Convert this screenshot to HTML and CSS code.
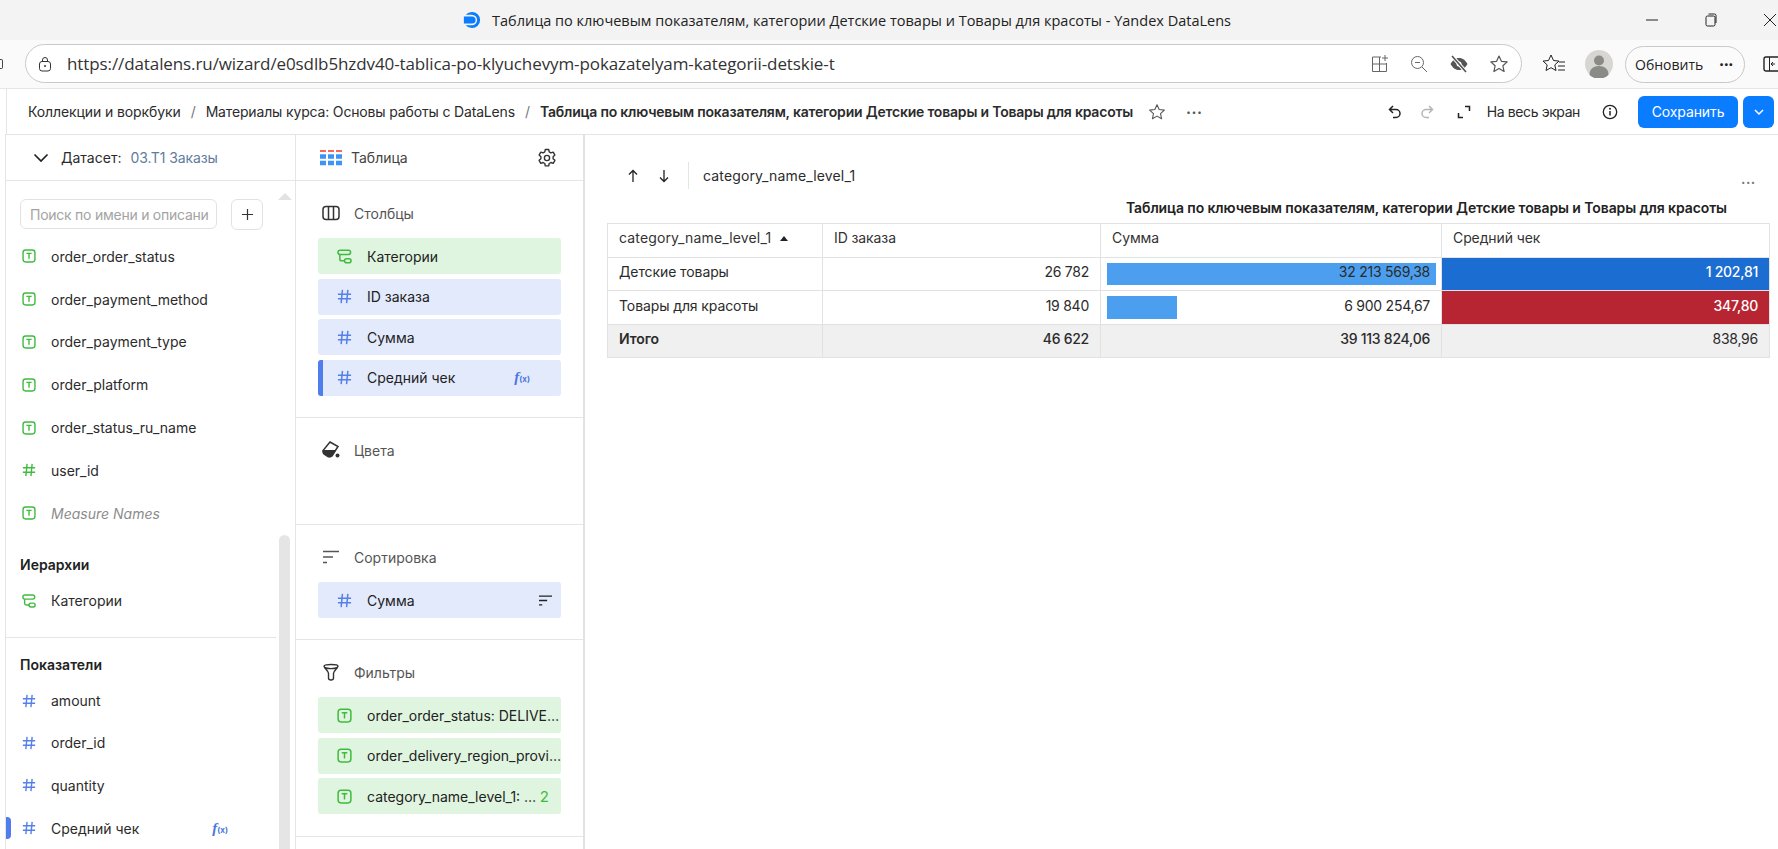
FILE: index.html
```html
<!DOCTYPE html>
<html>

<head>
    <title>Yandex DataLens</title>
    <link rel="stylesheet" href="styles.css">
</head>

<body>
    <svg class="sprite" xmlns="http://www.w3.org/2000/svg">
        <symbol id="i-text" viewBox="0 0 16 16">
            <rect x="1.2" y="1.2" width="13.6" height="13.6" rx="3" fill="none" stroke="currentColor" stroke-width="1.6"/>
            <path d="M5 5h6M8 5v6.2" fill="none" stroke="currentColor" stroke-width="1.6"/>
        </symbol>
        <symbol id="i-hash" viewBox="0 0 16 16">
            <path d="M1 5.5h14M1 10.5h14M5.8 1 4.4 15M11.6 1l-1.4 14" fill="none" stroke="currentColor" stroke-width="1.6"/>
        </symbol>
        <symbol id="i-tree" viewBox="0 0 16 16">
            <rect x="1" y="1.2" width="13.5" height="4.6" rx="2.3" fill="none" stroke="currentColor" stroke-width="1.6"/>
            <rect x="8" y="10.4" width="7" height="4.4" rx="2.2" fill="none" stroke="currentColor" stroke-width="1.6"/>
            <path d="M3 6v4.6c0 1 .6 2 2 2h3" fill="none" stroke="currentColor" stroke-width="1.6"/>
        </symbol>
        <symbol id="i-sort" viewBox="0 0 18 16">
            <path d="M1 2.5h16M1 8h10M1 13.5h4" fill="none" stroke="currentColor" stroke-width="1.6"/>
        </symbol>
        <symbol id="i-star" viewBox="0 0 20 20">
            <path d="m10 2 2.4 5.3 5.8.6-4.3 3.9 1.2 5.7-5.1-2.9-5.1 2.9 1.2-5.7-4.3-3.9 5.8-.6z" fill="none" stroke="currentColor" stroke-width="1.2" stroke-linejoin="round"/>
        </symbol>
    </svg>

    <div class="titlebar">
        <svg class="favicon" viewBox="0 0 20 20">
            <path d="M10 1a9 9 0 0 1 0 18 9 9 0 0 1-7-3.3h7a5.7 5.7 0 0 0 0-11.4H3A9 9 0 0 1 10 1z" fill="#0a7cff"/>
            <path d="M1 6h9a4 4 0 0 1 0 8H1z" fill="#0a7cff"/>
        </svg>
        <span>Таблица по ключевым показателям, категории Детские товары и Товары для красоты - Yandex DataLens</span>
        <div class="winbtns">
            <svg viewBox="0 0 16 16"><path d="M2 8h12" stroke="#222" fill="none"/></svg>
            <svg viewBox="0 0 16 16"><rect x="3" y="4" width="9" height="10" rx="1.5" stroke="#222" fill="none"/><path d="M5.5 2h6A1.5 1.5 0 0 1 13 3.5V11" stroke="#222" fill="none"/></svg>
            <svg viewBox="0 0 16 16"><path d="m2 2 12 12M14 2 2 14" stroke="#222" fill="none"/></svg>
        </div>
    </div>

    <div class="toolbar">
        <span class="clip-icon"></span>
        <div class="address">
            <svg class="lock" viewBox="0 0 16 16"><rect x="2.5" y="5.5" width="11" height="9.5" rx="2.5" fill="none" stroke="#333"/><path d="M5.5 5.5V4a2.5 2.5 0 0 1 5 0v1.5" fill="none" stroke="#333"/><circle cx="8" cy="10" r="1" fill="#333"/></svg>
            <span class="url">https://datalens.ru/wizard/e0sdlb5hzdv40-tablica-po-klyuchevym-pokazatelyam-kategorii-detskie-t</span>
            <div class="addr-icons">
                <svg viewBox="0 0 20 20"><path d="M12 3H3.5v14.500H17.5V9M3.500 10H17.500M10.500 3v14.500M16 1v6M13 4h6" fill="none" stroke="#666"/></svg>
                <svg viewBox="0 0 20 20"><circle cx="8.5" cy="8.5" r="6" fill="none" stroke="#666"/><path d="m13 13 5 5M6 8.5h5" fill="none" stroke="#666"/></svg>
                <svg viewBox="0 0 20 20"><path d="M1.5 10C4 5.5 7 4 10 4s6 1.500 8.500 6C16 14.500 13 16 10 16s-6-1.500-8.500-6z" fill="#555"/><circle cx="10" cy="10" r="2.5" fill="#fff"/><path d="m3 2 14 16" stroke="#fff" stroke-width="3.5"/><path d="m3 2 14 16" stroke="#555" stroke-width="1.6"/></svg>
                <svg class="star-gray"><use href="#i-star"/></svg>
            </div>
        </div>
        <svg class="fav-list" viewBox="0 0 24 20"><path d="m9 1 2.500 5.500 5.500.6-4.200 3.800 1.200 5.600L9 13.700 4 16.500l1.200-5.600L1 7.100l5.500-.6z" fill="none" stroke="#222" stroke-linejoin="round"/><path d="M17 8h6M16 12h7M16 16h7" stroke="#222" fill="none"/></svg>
        <svg class="avatar" viewBox="0 0 28 28"><circle cx="14" cy="14" r="14" fill="#d8d6d2"/><circle cx="14" cy="10.5" r="5" fill="#8a8a86"/><path d="M4.500 25c0-6 4-9 9.500-9s9.500 3 9.500 9a14 14 0 0 1-19 0z" fill="#8a8a86"/></svg>
        <div class="update">Обновить <span class="update-dots">···</span></div>
        <svg class="side-icon" viewBox="0 0 15 20"><rect x="1" y="3" width="22" height="14" rx="2" fill="none" stroke="#222" stroke-width="1.4"/><path d="M6.500 3v14M12 10H8.500m1.500-2-2 2 2 2" fill="none" stroke="#222"/></svg>
    </div>

    <div class="crumbs">
        <span>Коллекции и воркбуки</span>
        <span class="sep">/</span>
        <span class="crumb-mid">Материалы курса: Основы работы с DataLens</span>
        <span class="sep">/</span>
        <span class="crumb-now">Таблица по ключевым показателям, категории Детские товары и Товары для красоты</span>
        <svg class="crumb-star"><use href="#i-star"/></svg>
        <span class="dots">•••</span>
        <div class="actions">
            <svg class="undo" viewBox="0 0 16 16"><path d="M6 2 2.500 5.500 6 9M3 5.500h6a4 4 0 0 1 0 8H6" fill="none" stroke="#222" stroke-width="1.5"/></svg>
            <svg class="redo" viewBox="0 0 16 16"><path d="M10 2l3.500 3.500L10 9M13 5.500H7a4 4 0 0 0 0 8h3" fill="none" stroke="#b5b5b5" stroke-width="1.5"/></svg>
            <svg class="expand" viewBox="0 0 16 16"><path d="M9 2.500h4.500V7M2.500 9v4.500H7" fill="none" stroke="#222" stroke-width="1.5"/></svg>
            <span class="full">На весь экран</span>
            <svg class="info" viewBox="0 0 16 16"><circle cx="8" cy="8" r="6.7" fill="none" stroke="#222" stroke-width="1.3"/><path d="M8 7v4.500" stroke="#222" stroke-width="1.5"/><circle cx="8" cy="4.8" r="1" fill="#222"/></svg>
            <div class="save">Сохранить</div>
            <div class="save-more"><svg viewBox="0 0 12 12"><path d="m2 4 4 4 4-4" fill="none" stroke="#fff" stroke-width="1.5"/></svg></div>
        </div>
    </div>

    <div class="main">
        <div class="fields">
            <div class="dataset">
                <svg viewBox="0 0 16 10"><path d="m1.500 1.500 6.500 6.500 6.500-6.500" fill="none" stroke="#222" stroke-width="1.7"/></svg>
                <span class="ds-label">Датасет:</span>
                <span class="ds-name">03.T1 Заказы</span>
            </div>
            <div class="field-scroll">
                <div class="scroll-up"></div>
                <div class="scroll-thumb"></div>
                <div class="search-row">
                    <div class="search"><span>Поиск по имени и описани</span></div>
                    <div class="plus"><svg viewBox="0 0 14 14"><path d="M7 1v12M1 7h12" stroke="#333" stroke-width="1.3"/></svg></div>
                </div>
                <div class="field"><svg class="ic green"><use href="#i-text"/></svg>order_order_status</div>
                <div class="field"><svg class="ic green"><use href="#i-text"/></svg>order_payment_method</div>
                <div class="field"><svg class="ic green"><use href="#i-text"/></svg>order_payment_type</div>
                <div class="field"><svg class="ic green"><use href="#i-text"/></svg>order_platform</div>
                <div class="field"><svg class="ic green"><use href="#i-text"/></svg>order_status_ru_name</div>
                <div class="field"><svg class="ic green"><use href="#i-hash"/></svg>user_id</div>
                <div class="field field-virtual"><svg class="ic green"><use href="#i-text"/></svg>Measure Names</div>

                <div class="group-title group-first">Иерархии</div>
                <div class="field field-tight"><svg class="ic green"><use href="#i-tree"/></svg>Категории</div>
                <div class="group-line"></div>

                <div class="group-title group-measures">Показатели</div>
                <div class="field field-first"><svg class="ic blue"><use href="#i-hash"/></svg>amount</div>
                <div class="field"><svg class="ic blue"><use href="#i-hash"/></svg>order_id</div>
                <div class="field"><svg class="ic blue"><use href="#i-hash"/></svg>quantity</div>
                <div class="field field-calc"><svg class="ic blue"><use href="#i-hash"/></svg>Средний чек<span class="fx">f<small>(x)</small></span></div>
            </div>
        </div>

        <div class="sections">
            <div class="viz-type">
                <svg class="viz-icon" viewBox="0 0 22 16">
                    <path d="M0 1h6M8 1h6M16 1h6" stroke="#f2695c" stroke-width="2"/>
                    <path d="M0 6.500h6M8 6.500h6M16 6.500h6M0 13h6M8 13h6M16 13h6" stroke="#3f93f5" stroke-width="4.5"/>
                </svg>
                <span>Таблица</span>
                <svg class="gear" viewBox="0 0 20 20"><path d="M8.300 1.500h3.400l.5 2.400 1.700 1 2.300-.8 1.700 3-1.800 1.600v2l1.800 1.600-1.700 3-2.300-.8-1.700 1-.5 2.400H8.300l-.5-2.400-1.700-1-2.300.8-1.700-3 1.800-1.600v-2L2.100 7.100l1.700-3 2.300.8 1.700-1z" fill="none" stroke="#333" stroke-width="1.4" stroke-linejoin="round"/><circle cx="10" cy="10" r="2.6" fill="none" stroke="#333" stroke-width="1.4"/></svg>
            </div>

            <div class="section section-cols">
                <div class="sec-head"><svg viewBox="0 0 18 16"><rect x="1" y="1.5" width="16" height="13" rx="3" fill="none" stroke="#333" stroke-width="1.5"/><path d="M6.500 1.500v13M11.500 1.500v13" stroke="#333" stroke-width="1.5"/></svg>Столбцы</div>
                <div class="chip chip-green"><svg class="ic green"><use href="#i-tree"/></svg><span class="chip-text">Категории</span></div>
                <div class="chip chip-blue"><svg class="ic blue"><use href="#i-hash"/></svg><span class="chip-text">ID заказа</span></div>
                <div class="chip chip-blue"><svg class="ic blue"><use href="#i-hash"/></svg><span class="chip-text">Сумма</span></div>
                <div class="chip chip-blue chip-calc"><svg class="ic blue"><use href="#i-hash"/></svg><span class="chip-text">Средний чек</span><span class="fx">f<small>(x)</small></span></div>
            </div>

            <div class="section section-colors">
                <div class="sec-head"><svg viewBox="0 0 18 18"><path d="M8 1 16 5.500 10 15Q8 16.500 6 15.500L2 13Q.5 11 1 9.500z" fill="none" stroke="#333" stroke-width="1.5"/><path d="M1 9H14L10 15Q8 16.500 6 15.500L2 13Q.5 11 1 9z" fill="#333"/><circle cx="15.5" cy="14.5" r="2" fill="#333"/></svg>Цвета</div>
            </div>

            <div class="section section-sort">
                <div class="sec-head"><svg viewBox="0 0 18 16"><use href="#i-sort"/></svg>Сортировка</div>
                <div class="chip chip-blue"><svg class="ic blue"><use href="#i-hash"/></svg><span class="chip-text">Сумма</span><svg class="chip-sort"><use href="#i-sort"/></svg></div>
            </div>

            <div class="section section-filters">
                <div class="sec-head"><svg viewBox="0 0 18 18"><path d="M2 3.200C2 1 16 1 16 3.200c0 1.500-4.500 5-4.500 7V15c0 1.500-1 2-2.500 2s-2.500-.5-2.500-2v-4.800c0-2-4.500-5.500-4.500-7z" fill="none" stroke="#333" stroke-width="1.4"/><path d="M2.500 4.500c3 1.500 10 1.500 13 0" fill="none" stroke="#333" stroke-width="1.4"/></svg>Фильтры</div>
                <div class="chip chip-green"><svg class="ic green"><use href="#i-text"/></svg><span class="chip-text">order_order_status: DELIVE…</span></div>
                <div class="chip chip-green"><svg class="ic green"><use href="#i-text"/></svg><span class="chip-text">order_delivery_region_provi…</span></div>
                <div class="chip chip-green"><svg class="ic green"><use href="#i-text"/></svg><span class="chip-text">category_name_level_1: …</span><span class="count">2</span></div>
            </div>
        </div>

        <div class="chart">
            <div class="chart-top">
                <svg class="arrow" viewBox="0 0 12 14"><path d="M6 13V2M2 5.500 6 1.500l4 4" fill="none" stroke="#222" stroke-width="1.3"/></svg>
                <svg class="arrow" viewBox="0 0 12 14"><path d="M6 1v11M2 8.500l4 4 4-4" fill="none" stroke="#222" stroke-width="1.3"/></svg>
                <span class="chart-sep"></span>
                <span class="chart-crumb">category_name_level_1</span>
                <span class="chart-dots">•••</span>
            </div>
            <div class="chart-title">Таблица по ключевым показателям, категории Детские товары и Товары для красоты</div>
            <table class="tbl">
                <tr class="head">
                    <td class="c1">category_name_level_1 <span class="sort-mark"></span></td>
                    <td class="c2">ID заказа</td>
                    <td class="c3">Сумма</td>
                    <td class="c4">Средний чек</td>
                </tr>
                <tr>
                    <td>Детские товары</td>
                    <td class="num">26 782</td>
                    <td class="num bar-cell"><span class="bar" style="width:329px"></span><span class="bar-val">32 213 569,38</span></td>
                    <td class="num hi">1 202,81</td>
                </tr>
                <tr>
                    <td>Товары для красоты</td>
                    <td class="num">19 840</td>
                    <td class="num bar-cell"><span class="bar" style="width:70px"></span><span class="bar-val">6 900 254,67</span></td>
                    <td class="num lo">347,80</td>
                </tr>
                <tr class="total">
                    <td>Итого</td>
                    <td class="num">46 622</td>
                    <td class="num">39 113 824,06</td>
                    <td class="num plain">838,96</td>
                </tr>
            </table>
        </div>
    </div>
</body>

</html>
```

FILE: styles.css
```css
* {
    box-sizing: border-box;
}

body {
    margin: 0;
    width: 1778px;
    height: 849px;
    overflow: hidden;
    background: #fff;
    color: #2b2b2b;
    font-family: "Inter", "Noto Sans", sans-serif;
    font-size: 14px;
}

svg {
    display: block;
    flex: none;
}

.sprite {
    width: 0;
    height: 0;
    overflow: hidden;
    position: absolute;
}

/* browser chrome */
.titlebar {
    height: 40px;
    background: #f3f3f3;
    display: flex;
    align-items: center;
    padding-left: 463px;
    font-family: "Open Sans", sans-serif;
    font-size: 14.5px;
    color: #222;
}

.favicon {
    width: 18px;
    height: 18px;
    margin-right: 11px;
}

.winbtns {
    margin-left: auto;
    display: flex;
    gap: 43px;
}

.winbtns svg {
    width: 16px;
    height: 16px;
}

.toolbar {
    height: 49px;
    background: #fafafa;
    border-bottom: 1px solid #e6e6e6;
    display: flex;
    align-items: center;
    font-family: "Open Sans", sans-serif;
}

.clip-icon {
    width: 3px;
    height: 10px;
    margin-right: 22px;
    border: 1px solid #444;
    border-left: 0;
    border-radius: 0 2px 2px 0;
}

.address {
    width: 1497px;
    height: 39px;
    margin-top: -1px;
    border: 1px solid #c9c9c9;
    border-radius: 20px;
    background: #fff;
    display: flex;
    align-items: center;
    padding-left: 11px;
}

.lock {
    width: 16px;
    height: 16px;
    margin-right: 14px;
}

.url {
    font-size: 17px;
    color: #333;
    letter-spacing: -0.1px;
}

.addr-icons {
    margin-left: auto;
    margin-right: 12px;
    display: flex;
    gap: 20px;
}

.addr-icons svg {
    width: 20px;
    height: 20px;
}

.star-gray {
    color: #555;
}

.fav-list {
    width: 24px;
    height: 20px;
    margin-left: 20px;
}

.avatar {
    width: 28px;
    height: 28px;
    margin-left: 19px;
}

.update {
    width: 120px;
    height: 37px;
    margin-left: 12px;
    border: 1px solid #c9c9c9;
    border-radius: 19px;
    display: flex;
    align-items: center;
    justify-content: space-between;
    padding: 0 11px 0 9px;
    font-size: 14px;
    color: #222;
    background: #fbfbfb;
}

.update-dots {
    font-weight: 700;
    font-size: 16px;
}

.side-icon {
    width: 15px;
    height: 20px;
    margin-left: 18px;
}

/* breadcrumbs */
.crumbs {
    height: 45px;
    margin-left: 6px;
    border-left: 1px solid #e5e5e5;
    display: flex;
    align-items: center;
    padding-left: 21px;
    color: #2b2b2b;
    white-space: nowrap;
    letter-spacing: -0.1px;
}

.sep {
    margin: 0 10px;
    color: #777;
}

.crumb-mid {
    letter-spacing: -0.16px;
}

.crumb-now {
    font-weight: 600;
    letter-spacing: -0.2px;
}

.crumb-star {
    width: 18px;
    height: 18px;
    margin-left: 15px;
    color: #555;
}

.dots {
    margin-left: 20px;
    color: #555;
    font-size: 8px;
    letter-spacing: 1px;
}

.actions {
    margin-left: auto;
    display: flex;
    align-items: center;
    padding-right: 4px;
}

.undo,
.redo,
.expand {
    width: 16px;
    height: 16px;
}

.redo {
    margin-left: 16px;
}

.expand {
    margin-left: 21px;
}

.full {
    margin-left: 15px;
    letter-spacing: -0.4px;
}

.info {
    width: 16px;
    height: 16px;
    margin-left: 22px;
}

.save {
    width: 100px;
    height: 32px;
    margin-left: 20px;
    background: #0a7cff;
    color: #fff;
    display: flex;
    align-items: center;
    justify-content: center;
    border-radius: 6px;
}

.save-more {
    width: 31px;
    height: 32px;
    margin-left: 5px;
    background: #0a7cff;
    border-radius: 6px;
    display: flex;
    align-items: center;
    justify-content: center;
}

.save-more svg {
    width: 12px;
    height: 12px;
}

/* wizard columns */
.main {
    display: flex;
    height: 715px;
    border-top: 1px solid #e5e5e5;
    margin-left: 5px;
}

.fields {
    width: 291px;
    border-left: 1px solid #e5e5e5;
    border-right: 1px solid #e5e5e5;
    flex: none;
}

.dataset {
    height: 46px;
    border-bottom: 1px solid #e5e5e5;
    display: flex;
    align-items: center;
    padding-left: 27px;
}

.dataset svg {
    width: 16px;
    height: 10px;
    margin-right: 12px;
}

.ds-label {
    margin-right: 9px;
}

.ds-name {
    color: #5f7c9c;
    letter-spacing: -0.1px;
}

.field-scroll {
    position: relative;
    padding-top: 18px;
}

.scroll-up {
    position: absolute;
    top: 12px;
    left: 272px;
    border-left: 7px solid transparent;
    border-right: 7px solid transparent;
    border-bottom: 7px solid #e2e2e2;
}

.scroll-thumb {
    position: absolute;
    top: 354px;
    left: 273px;
    width: 11px;
    height: 320px;
    background: #e5e5e5;
    border-radius: 6px 6px 0 0;
}

.search-row {
    display: flex;
    gap: 14px;
    padding-left: 14px;
    margin-bottom: 5px;
}

.search {
    width: 197px;
    height: 30px;
    border: 1px solid #e2e2e2;
    border-radius: 6px;
    color: #a3a3a3;
    display: flex;
    align-items: center;
    padding: 0 0 0 9px;
    white-space: nowrap;
    letter-spacing: -0.25px;
}

.plus {
    width: 32px;
    height: 31px;
    border: 1px solid #e2e2e2;
    border-radius: 6px;
    display: flex;
    align-items: center;
    justify-content: center;
}

.plus svg {
    width: 13px;
    height: 13px;
}

.field {
    height: 42.8px;
    display: flex;
    align-items: center;
    padding-left: 16px;
    position: relative;
}

.field .ic {
    margin-right: 15px;
}

.ic {
    width: 14px;
    height: 14px;
    flex: none;
}

.green {
    color: #3fbb3f;
}

.blue {
    color: #5580ea;
}

.field-virtual {
    font-style: italic;
    color: #8c8c8c;
}

.field-tight {
    height: 36px;
}

.field-first {
    height: 41.2px;
}

.field-calc {
    padding-right: 67px;
}

.field-calc::before {
    content: "";
    position: absolute;
    left: 0;
    top: 10px;
    width: 5px;
    height: 22px;
    background: #4f7ded;
    border-radius: 0 4px 4px 0;
}

.fx {
    margin-left: auto;
    color: #4a76e0;
    font-style: italic;
    font-weight: 700;
    font-family: "Liberation Serif", serif;
    font-size: 15px;
    line-height: 1;
}

.fx small {
    font-size: 8px;
    font-style: normal;
    font-weight: 700;
    font-family: "Inter", sans-serif;
}

.group-title {
    font-weight: 600;
    color: #222;
    padding-left: 14px;
    height: 20px;
    line-height: 20px;
    margin-top: 18px;
    margin-bottom: 8px;
}

.group-first {
    margin-top: 20px;
}

.group-measures {
    margin-top: 17px;
    margin-bottom: 5.4px;
}

.group-line {
    width: 270px;
    height: 1px;
    margin-top: 18px;
    background: #e5e5e5;
}

.sections {
    width: 289px;
    flex: none;
    border-right: 2px solid #e2e2e2;
}

.viz-type {
    height: 46px;
    border-bottom: 1px solid #e5e5e5;
    display: flex;
    align-items: center;
    padding-left: 24px;
    color: #444;
}

.viz-icon {
    width: 22px;
    height: 16px;
    margin-right: 9px;
}

.gear {
    width: 20px;
    height: 20px;
    margin-left: auto;
    margin-right: 26px;
}

.section {
    padding: 0 22px;
    border-bottom: 1px solid #e5e5e5;
}

.section-cols {
    height: 237px;
}

.section-colors {
    height: 107px;
}

.section-sort {
    height: 115px;
}

.section-filters {
    height: 197px;
}

.sec-head {
    height: 57px;
    padding: 7px 0 0 4px;
    display: flex;
    align-items: center;
    gap: 14px;
    color: #555;
}

.sec-head svg {
    width: 18px;
    height: 18px;
}

.chip {
    height: 36px;
    margin-bottom: 4.5px;
    border-radius: 3px;
    display: flex;
    align-items: center;
    padding-left: 19px;
    padding-right: 5px;
    color: #222;
}

.chip-green {
    background: #e0f5df;
}

.chip-blue {
    background: #e3eafc;
}

.chip .ic {
    width: 15px;
    height: 15px;
    margin-right: 15px;
}

.chip-calc {
    border-left: 5px solid #4f7ded;
    padding-left: 14px;
    padding-right: 31px;
}

.chip-text {
    white-space: nowrap;
}

.count {
    color: #3fbb3f;
    margin-left: auto;
    margin-right: 7px;
    font-size: 15px;
}

.chip-sort {
    width: 15px;
    height: 13px;
    margin-left: auto;
    margin-right: 3px;
}

/* table chart */
.chart {
    flex: 1;
    padding: 0 2px 0 22px;
}

.chart-top {
    height: 61px;
    padding-top: 20px;
    padding-left: 20px;
    display: flex;
    align-items: center;
}

.arrow {
    width: 12px;
    height: 14px;
    margin-right: 19px;
}

.chart-sep {
    width: 1px;
    height: 27px;
    background: #e5e5e5;
    margin-left: -1px;
    margin-right: 14px;
}

.chart-crumb {
    letter-spacing: 0.15px;
}

.chart-dots {
    margin-left: auto;
    margin-right: 20px;
    margin-top: 13px;
    color: #777;
    font-size: 7px;
    letter-spacing: 1px;
}

.chart-title {
    height: 27px;
    line-height: 24px;
    font-weight: 600;
    text-align: right;
    padding-right: 49px;
    white-space: nowrap;
    letter-spacing: -0.1px;
    color: #222;
}

.tbl {
    width: 1163px;
    height: 135px;
    table-layout: fixed;
    border-collapse: collapse;
    border: 1px solid #e2e2e2;
}

.tbl td {
    border: 1px solid #e2e2e2;
    padding: 0 11px 4px;
    height: 33px;
    white-space: nowrap;
    letter-spacing: -0.1px;
}

.tbl .c1 {
    width: 215px;
    letter-spacing: 0.15px;
}

.c2 {
    width: 278px;
}

.c3 {
    width: 341px;
}

.tbl .head td {
    color: #333;
    padding-bottom: 6px;
}

.sort-mark {
    display: inline-block;
    margin-left: 5px;
    vertical-align: 2px;
    border-left: 4px solid transparent;
    border-right: 4px solid transparent;
    border-bottom: 5px solid #222;
}

.num {
    text-align: right;
}

.tbl .num {
    letter-spacing: -0.25px;
}

.bar-cell {
    position: relative;
}

.bar {
    position: absolute;
    left: 6px;
    top: 5px;
    bottom: 5px;
    background: #4c9fef;
}

.bar-val {
    position: relative;
}

.tbl .hi {
    background: #1b6dd1;
    color: #fff;
    font-weight: 500;
}

.tbl .lo {
    background: #b72432;
    color: #fff;
    font-weight: 500;
}

.total td {
    background: #f0f0f0;
    font-weight: 500;
}

.total .plain {
    font-weight: 400;
}

.total td:first-child {
    font-weight: 600;
}
```
